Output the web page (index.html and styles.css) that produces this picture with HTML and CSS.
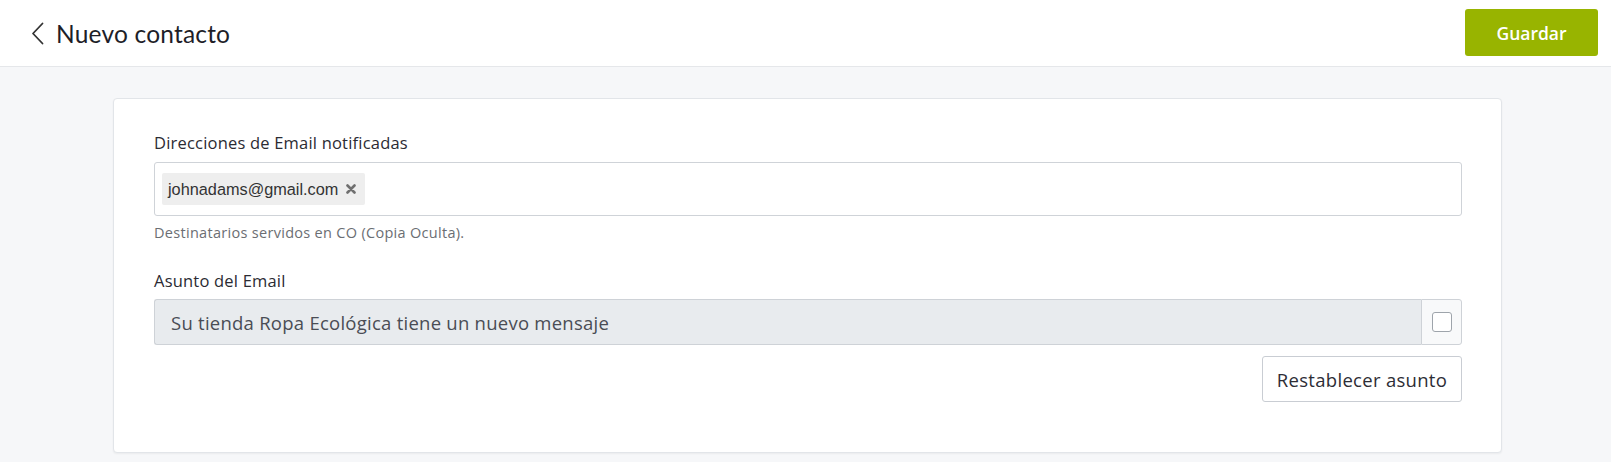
FILE: index.html
```html
<!DOCTYPE html>
<html lang="es">
<head>
<meta charset="utf-8">
<title>Nuevo contacto</title>
<link rel="stylesheet" href="styles.css">
</head>
<body>
<header class="topbar">
  <div class="title-wrap">
    <button class="back" aria-label="Volver">
      <svg width="13" height="23" viewBox="0 0 13 23"><path d="M11.5 1.5 L2 11.5 L11.5 21.5" fill="none" stroke="#333" stroke-width="1.8" stroke-linecap="round" stroke-linejoin="round"/></svg>
    </button>
    <h1 class="title">Nuevo contacto</h1>
  </div>
  <button class="btn-primary">Guardar</button>
</header>
<main class="main">
  <section class="card">
    <label class="label">Direcciones de Email notificadas</label>
    <div class="tag-input">
      <span class="chip">johnadams@gmail.com <span class="chip-x">
        <svg width="10" height="10" viewBox="0 0 10 10"><path d="M1.5 1.5 L8.5 8.5 M8.5 1.5 L1.5 8.5" stroke="#6f6f6f" stroke-width="2.6" stroke-linecap="round"/></svg>
      </span></span>
    </div>
    <p class="help">Destinatarios servidos en CO (Copia Oculta).</p>
    <label class="label label-2">Asunto del Email</label>
    <div class="input-group">
      <div class="subject">Su tienda Ropa Ecológica tiene un nuevo mensaje</div>
      <div class="addon"><span class="checkbox"></span></div>
    </div>
    <div class="actions">
      <button class="btn-secondary">Restablecer asunto</button>
    </div>
  </section>
</main>
</body>
</html>
```

FILE: styles.css
```css
* { box-sizing: border-box; }
html, body { margin: 0; padding: 0; }
body {
  background: #f6f7f9;
  font-family: "Open Sans", "Lato", sans-serif;
  color: #333;
  width: 1611px;
  height: 462px;
  overflow: hidden;
}
.topbar {
  height: 67px;
  background: #fff;
  border-bottom: 1px solid #e5e7ea;
  display: flex;
  align-items: center;
  justify-content: space-between;
  padding: 0 13px 0 31px;
}
.title-wrap { display: flex; align-items: center; gap: 12px; }
.back {
  background: none; border: 0; padding: 0; margin: 0;
  display: flex; align-items: center; cursor: pointer;
}
.title {
  margin: 0;
  font-family: "Lato", sans-serif;
  font-size: 24.5px;
  font-weight: 400;
  color: #1e1e28;
  letter-spacing: 0.2px;
}
.btn-primary {
  width: 133px;
  height: 47px;
  margin-top: -1px;
  border: 0;
  border-radius: 3px;
  background: #98b400;
  color: #fff;
  font-family: "Open Sans", sans-serif;
  font-size: 17.5px;
  font-weight: 600;
}
.main { padding: 31px 109px 0 113px; }
.card {
  background: #fff;
  border: 1px solid #e2e5e9;
  border-radius: 4px;
  box-shadow: 0 1px 2px rgba(0,0,0,0.05);
  padding: 34px 39px 50px 40px;
  display: flex;
  flex-direction: column;
}
.label {
  display: block;
  font-size: 16.5px;
  letter-spacing: 0.2px;
  line-height: 20px;
  height: 20px;
  color: #2b2b33;
}
.tag-input {
  margin-top: 9px;
  height: 54px;
  border: 1px solid #cfd3d8;
  border-radius: 3px;
  padding: 11px 7px;
  display: flex;
  align-items: center;
}
.chip {
  height: 32px;
  display: inline-flex;
  align-items: center;
  gap: 8px;
  padding: 0 9px 0 6px;
  background: #eeeeee;
  border-radius: 2px;
  font-family: "Liberation Sans", Arial, sans-serif;
  font-size: 16.3px;
  color: #333;
}
.chip-x { display: inline-flex; }
.help {
  margin: 8px 0 0;
  font-size: 14.5px;
  letter-spacing: 0.3px;
  line-height: 18px;
  height: 18px;
  color: #6b6e73;
}
.label-2 { margin-top: 29px; }
.input-group {
  margin-top: 8px;
  height: 46px;
  display: flex;
}
.subject {
  flex: 1;
  background: #e8ebee;
  border: 1px solid #ced2d7;
  border-right: 0;
  border-radius: 3px 0 0 3px;
  padding: 0 16px;
  display: flex;
  align-items: center;
  font-size: 18.5px;
  letter-spacing: 0.25px;
  color: #4a4d55;
}
.addon {
  width: 41px;
  background: #f8f9fa;
  border: 1px solid #ced2d7;
  border-radius: 0 3px 3px 0;
  display: flex;
  align-items: center;
  justify-content: center;
}
.checkbox {
  width: 20px;
  height: 20px;
  border: 1px solid #9ea4ab;
  border-radius: 3px;
  background: #fff;
}
.actions {
  margin-top: 11px;
  display: flex;
  justify-content: flex-end;
}
.btn-secondary {
  width: 200px;
  height: 46px;
  background: #fff;
  border: 1px solid #c9cdd3;
  border-radius: 3px;
  font-family: "Open Sans", sans-serif;
  font-size: 18.5px;
  letter-spacing: 0.3px;
  color: #2d2d35;
}
```
